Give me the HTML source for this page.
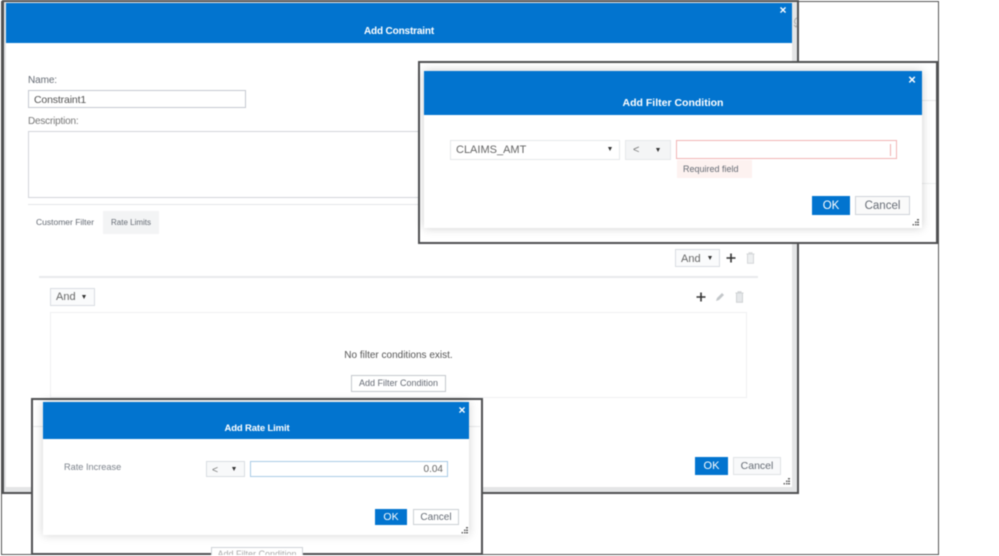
<!DOCTYPE html>
<html><head><meta charset="utf-8"><style>
html,body{margin:0;padding:0;background:#fff}
#p{position:relative;width:999px;height:556px;overflow:hidden;background:#fff;font-family:"Liberation Sans",sans-serif;color:#656b74;filter:blur(.5px)}
#p div{position:absolute;box-sizing:border-box}
.t{white-space:nowrap;line-height:14px}
.h{background:#0274cf}
.ttl{color:#fff;font-weight:bold;font-size:10px;letter-spacing:-.15px;text-align:center;line-height:14px}
.x{color:#fff;font-weight:bold;font-size:12px;line-height:12px;text-align:center;width:12px}
.b{border:1px solid #d9dde2;background:#fff}
.btn{border:1px solid #cfd3d8;background:#f8f9fa;text-align:center;font-size:10.5px}
.ok{background:#0274cf;color:#fff;text-align:center;font-size:11px}
.arr{width:0;height:0;border-left:2.500px solid transparent;border-right:2.500px solid transparent;border-top:4px solid #333}
.frame{border:2px solid #4f5052;background:#fff}
svg{position:absolute}
</style></head><body><div id="p">
<div style="left:1px;top:1px;width:938px;height:554px;border:1px solid #555"></div>

<div class="frame" style="left:2px;top:0;width:797px;height:494px;background:#e4e5e6"></div>
<div style="left:6px;top:3px;width:786px;height:484px;background:#fff"></div>
<div class="h" style="left:6px;top:3px;width:786px;height:40px"></div>
<div class="ttl" style="left:6px;top:25px;width:786px">Add Constraint</div>
<div class="x" style="left:777px;top:4px">×</div>
<svg style="left:793px;top:17px" width="5" height="11"><path d="M4 1C1 2 1 6 3 7M1 8l2 2 1-2" fill="none" stroke="#aaa"/></svg>

<div class="t" style="left:28px;top:74px;font-size:10px;letter-spacing:-.1px">Name:</div>
<div class="b" style="left:28px;top:90px;width:218px;height:18px;border-color:#c5c9d0"></div>
<div class="t" style="left:34px;top:93px;font-size:10.500px;letter-spacing:-.15px;color:#555">Constraint1</div>
<div class="t" style="left:28px;top:115px;font-size:10px;letter-spacing:-.2px;color:#777">Description:</div>
<div class="b" style="left:28px;top:131px;width:750px;height:67px;border-color:#d2d5da"></div>
<div style="left:28px;top:204px;width:750px;height:1px;background:#e3e5e8"></div>
<div class="t" style="left:36px;top:215px;font-size:8.500px">Customer Filter</div>
<div style="left:103px;top:211px;width:56px;height:23px;background:#f3f4f5"></div>
<div class="t" style="left:111px;top:216px;font-size:8px">Rate Limits</div>

<div class="b" style="left:675px;top:249px;width:45px;height:18px;background:#fafbfc"></div>
<div class="t" style="left:681px;top:252px;font-size:11px;color:#666">And</div>
<div class="arr" style="left:708px;top:256px"></div>
<svg style="left:726px;top:253px" width="10" height="10"><path d="M5 .5v9M.5 5h9" stroke="#333" stroke-width="1.600"/></svg>
<svg style="left:746px;top:252px" width="9" height="12"><path d="M.5 2h8M3 2V.7h3V2M1.500 2v9.300h6V2" fill="#eef0f1" stroke="#d5d7d9"/></svg>
<div style="left:39px;top:276px;width:719px;height:2px;background:#e8eaec"></div>

<div class="b" style="left:50px;top:288px;width:45px;height:18px;background:#fafbfc"></div>
<div class="t" style="left:56px;top:290px;font-size:11px;color:#666">And</div>
<div class="arr" style="left:82px;top:295px"></div>
<svg style="left:696px;top:292px" width="10" height="10"><path d="M5 .5v9M.5 5h9" stroke="#333" stroke-width="1.600"/></svg>
<svg style="left:715px;top:292px" width="10" height="10"><path d="M1 9l1-3 5-5 2 2-5 5z" fill="#c4c7ca"/></svg>
<svg style="left:735px;top:291px" width="9" height="12"><path d="M.5 2h8M3 2V.7h3V2M1.500 2v9.300h6V2" fill="#e6e8ea" stroke="#cfd2d4"/></svg>
<div class="b" style="left:50px;top:312px;width:697px;height:86px;border-color:#eff0f2"></div>
<div class="t" style="left:50px;top:349px;width:697px;text-align:center;font-size:10px;color:#555">No filter conditions exist.</div>
<div class="btn" style="left:351px;top:375px;width:95px;height:17px;line-height:15px;font-size:9px;background:#fff;border-color:#c4c8cd">Add Filter Condition</div>
<div class="ok" style="left:695px;top:457px;width:33px;height:18px;line-height:19px">OK</div>
<div class="btn" style="left:733px;top:457px;width:48px;height:18px;line-height:17px;border-color:#dfe2e5">Cancel</div>
<svg style="left:783px;top:478px" width="7" height="7"><path d="M5 0h2v1.500H5zM3 2.500h1.500V4H3zM5 2.500h2V4H5zM.5 5h1.500v1.500H.5zM3 5h1.500v1.500H3zM5 5h2v1.500H5z" fill="#666"/></svg>

<div class="frame" style="left:418px;top:61px;width:520px;height:183px;background:#fff"></div>
<div style="left:920px;top:100px;width:16px;height:1px;background:#e8e9ea"></div>
<div style="left:920px;top:183px;width:16px;height:1px;background:#eeeff0"></div>
<div style="left:424px;top:71px;width:498px;height:157px;background:#fff;box-shadow:0 0 9px rgba(0,0,0,.2)"></div>
<div class="h" style="left:424px;top:71px;width:498px;height:44px"></div>
<div class="ttl" style="left:424px;top:96px;width:498px;font-size:10.500px;letter-spacing:0">Add Filter Condition</div>
<div class="x" style="left:906px;top:74px;font-size:13px">×</div>
<div class="b" style="left:450px;top:140px;width:170px;height:20px;border-color:#e6e8ea"></div>
<div class="t" style="left:456px;top:143px;font-size:11px;color:#666">CLAIMS_AMT</div>
<div class="arr" style="left:608px;top:147px"></div>
<div class="b" style="left:625px;top:140px;width:46px;height:20px;background:#f4f5f6;border-color:#e6e8ea"></div>
<div class="t" style="left:633px;top:143px;font-size:11px;color:#777">&lt;</div>
<div class="arr" style="left:656px;top:148px"></div>
<div class="b" style="left:676px;top:140px;width:221px;height:19px;border-color:#f1b3b3"></div>
<div style="left:890px;top:144px;width:1px;height:12px;background:#efb0b0"></div>
<div style="left:677px;top:160px;width:75px;height:18px;background:#fdf2f0"></div>
<div class="t" style="left:683px;top:162px;font-size:9px">Required field</div>
<div class="ok" style="left:812px;top:196px;width:38px;height:19px;line-height:20px;font-size:11.500px">OK</div>
<div class="btn" style="left:855px;top:196px;width:55px;height:19px;line-height:19px;font-size:11.500px;background:#fafafa">Cancel</div>
<svg style="left:912px;top:219px" width="7" height="7"><path d="M5 0h2v1.500H5zM3 2.500h1.500V4H3zM5 2.500h2V4H5zM.5 5h1.500v1.500H.5zM3 5h1.500v1.500H3zM5 5h2v1.500H5z" fill="#666"/></svg>

<div class="frame" style="left:31px;top:398px;width:452px;height:157px;background:#fff"></div>
<div style="left:33px;top:426px;width:447px;height:1px;background:#e8e9ea"></div>
<div class="btn" style="left:211px;top:547px;width:92px;height:8px;border-bottom:0;background:#fff;overflow:hidden;line-height:12px;font-size:9px;color:#aaa">Add Filter Condition</div>
<div style="left:43px;top:402px;width:426px;height:133px;background:#fff;box-shadow:0 0 9px rgba(0,0,0,.18)"></div>
<div class="h" style="left:43px;top:402px;width:426px;height:37px"></div>
<div class="ttl" style="left:44px;top:422px;width:426px;font-size:9.500px">Add Rate Limit</div>
<div class="x" style="left:456px;top:404px">×</div>
<div class="t" style="left:64px;top:460px;font-size:9.200px;color:#7d838c">Rate Increase</div>
<div class="b" style="left:206px;top:461px;width:39px;height:16px;background:#f8f9fa"></div>
<div class="t" style="left:212px;top:463px;font-size:10.500px;color:#777">&lt;</div>
<div class="arr" style="left:232px;top:467px"></div>
<div class="b" style="left:250px;top:461px;width:198px;height:16px;border-color:#a9cbe6"></div>
<div class="t" style="left:250px;top:463px;width:193px;text-align:right;font-size:10px;color:#666">0.04</div>
<div class="ok" style="left:375px;top:509px;width:32px;height:16px;line-height:17px;font-size:10.500px">OK</div>
<div class="btn" style="left:413px;top:509px;width:46px;height:16px;line-height:15px;font-size:10px;background:#fff;border-color:#ccd0d4">Cancel</div>
<svg style="left:461px;top:527px" width="7" height="7"><path d="M5 0h2v1.500H5zM3 2.500h1.500V4H3zM5 2.500h2V4H5zM.5 5h1.500v1.500H.5zM3 5h1.500v1.500H3zM5 5h2v1.500H5z" fill="#666"/></svg>
</div></body></html>
